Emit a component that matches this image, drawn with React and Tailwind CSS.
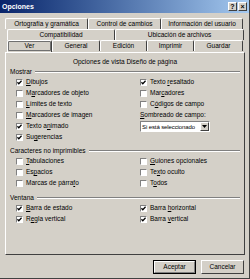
function Label({ text }) {
  const i = text.indexOf('&')
  if (i < 0) return <span>{text}</span>
  return (
    <span className="whitespace-nowrap">
      {text.slice(0, i)}
      <u className="underline-offset-[1px]">{text[i + 1]}</u>
      {text.slice(i + 2)}
    </span>
  )
}

function Check({ on, text }) {
  return (
    <div className="flex h-[11px] items-center gap-[3px]">
      <span className="flex h-[7px] w-[7px] shrink-0 items-center justify-center border border-t-[#808080] border-l-[#808080] border-b-[#ffffff] border-r-[#ffffff] bg-white">
        {on && (
          <svg width="5" height="5" viewBox="0 0 5 5">
            <path d="M0.4 2.3 L1.8 3.8 L4.6 0.8" fill="none" stroke="#000" strokeWidth="1.3" />
          </svg>
        )}
      </span>
      <Label text={text} />
    </div>
  )
}

function Tab({ w, children, selected }) {
  return (
    <div
      className={`flex shrink-0 items-center justify-center whitespace-nowrap rounded-t-[2px] border-t border-l border-r border-t-white border-l-white border-r-[#404040] ${selected ? 'h-[12px] outline outline-1 -outline-offset-2 outline-[#707070]' : 'h-[11px]'} ${w}`}
    >
      {children}
    </div>
  )
}

function Group({ title }) {
  return (
    <div className="flex h-[10px] items-center pl-[4px] pr-[4px]">
      <span className="whitespace-nowrap">{title}</span>
      <div className="ml-[3px] h-[2px] flex-1 border-t border-b border-t-[#808080] border-b-white" />
    </div>
  )
}

export default function App() {
  return (
    <div className="flex h-[279px] w-[250px] flex-col border-r border-b border-r-[#404040] border-b-[#404040] bg-[#d4d0c8] font-['Liberation_Sans',Arial,sans-serif] text-[6.5px] leading-none text-black">
      <div className="flex h-[13px] shrink-0 items-center justify-between bg-gradient-to-r from-[#0a246a] to-[#a6caf0] pl-[2px] pr-[2px]">
        <span className="text-[7px] font-bold text-white">Opciones</span>
        <div className="flex gap-[1px]">
          <div className="flex h-[9px] w-[9px] items-center justify-center border border-t-white border-l-white border-b-[#404040] border-r-[#404040] bg-[#d4d0c8] text-[7px] font-bold">?</div>
          <div className="flex h-[9px] w-[9px] items-center justify-center border border-t-white border-l-white border-b-[#404040] border-r-[#404040] bg-[#d4d0c8] text-[7px] font-bold">×</div>
        </div>
      </div>

      <div className="mt-[5px] flex flex-col">
        <div className="ml-[5px] flex">
          <Tab w="w-[83px]">Ortografía y gramática</Tab>
          <Tab w="w-[73px]">Control de cambios</Tab>
          <Tab w="w-[82px]">Información del usuario</Tab>
        </div>
        <div className="ml-[7px] flex">
          <Tab w="w-[108px]">Compatibilidad</Tab>
          <Tab w="w-[129px]">Ubicación de archivos</Tab>
        </div>
        <div className="ml-[7px] flex">
          <Tab w="w-[45px]" selected>Ver</Tab>
          <Tab w="w-[48px]">General</Tab>
          <Tab w="w-[47px]">Edición</Tab>
          <Tab w="w-[47px]">Imprimir</Tab>
          <Tab w="w-[49px]">Guardar</Tab>
        </div>
      </div>

      <div className="ml-[5px] flex h-[203px] w-[240px] flex-col border border-t-white border-l-white border-b-[#404040] border-r-[#404040] pt-[4px]">
        <div className="flex h-[10px] items-center justify-center">Opciones de vista Diseño de página</div>

        <Group title="Mostrar" />
        <div className="grid grid-cols-[124px_1fr] pl-[10px]">
          <div className="flex flex-col">
            <Check on text="&Dibujos" />
            <Check text="M&arcadores de objeto" />
            <Check text="&Límites de texto" />
            <Check text="&Marcadores de imagen" />
            <Check on text="Texto a&nimado" />
            <Check on text="Su&gerencias" />
          </div>
          <div className="flex flex-col">
            <Check on text="Texto &resaltado" />
            <Check text="Mar&cadores" />
            <Check text="C&ódigos de campo" />
            <div className="flex h-[11px] items-center">
              <Label text="&Sombreado de campo:" />
            </div>
            <div className="flex h-[11px] w-[70px] items-center border border-t-[#808080] border-l-[#808080] border-b-white border-r-white bg-white">
              <span className="flex-1 whitespace-nowrap pl-[1px] text-[6px] tracking-[-0.1px]">Si está seleccionado</span>
              <div className="flex h-[9px] w-[9px] shrink-0 items-center justify-center border border-t-white border-l-white border-b-[#404040] border-r-[#404040] bg-[#d4d0c8]">
                <svg width="5" height="3" viewBox="0 0 5 3">
                  <path d="M0 0 H5 L2.5 3 Z" fill="#000" />
                </svg>
              </div>
            </div>
          </div>
        </div>

        <div className="mt-[3px]">
          <Group title="Caracteres no imprimibles" />
        </div>
        <div className="grid grid-cols-[124px_1fr] pl-[10px]">
          <div className="flex flex-col">
            <Check text="&Tabulaciones" />
            <Check text="Es&pacios" />
            <Check text="Marcas de párra&fo" />
          </div>
          <div className="flex flex-col">
            <Check text="&Guiones opcionales" />
            <Check text="Te&xto oculto" />
            <Check text="T&odos" />
          </div>
        </div>

        <div className="mt-[4px]">
          <Group title="Ventana" />
        </div>
        <div className="grid grid-cols-[124px_1fr] pl-[10px]">
          <div className="flex flex-col">
            <Check on text="&Barra de estado" />
            <Check on text="R&egla vertical" />
          </div>
          <div className="flex flex-col">
            <Check on text="Barra &horizontal" />
            <Check on text="Barra &vertical" />
          </div>
        </div>
      </div>

      <div className="mt-[5px] flex justify-end gap-[5px] pr-[5px]">
        <div className="flex h-[14px] w-[43px] items-center justify-center border border-[#000] bg-[#d4d0c8]">
          <div className="flex h-full w-full items-center justify-center border border-t-white border-l-white border-b-[#808080] border-r-[#808080]">Aceptar</div>
        </div>
        <div className="flex h-[14px] w-[43px] items-center justify-center border border-t-white border-l-white border-b-[#404040] border-r-[#404040] bg-[#d4d0c8]">
          Cancelar
        </div>
      </div>
    </div>
  )
}
